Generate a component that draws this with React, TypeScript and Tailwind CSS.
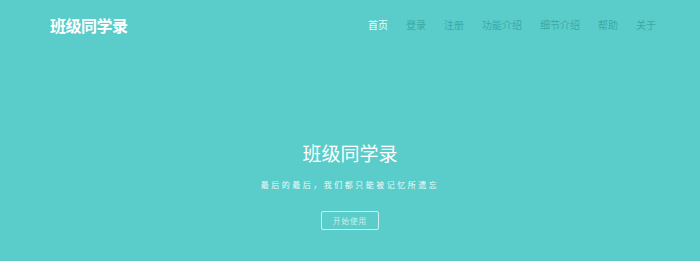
import React from 'react';

const navItems = ['首页', '登录', '注册', '功能介绍', '细节介绍', '帮助', '关于'];

const App = () => {
  return (
    <div
      className="w-[700px] h-[261px] overflow-hidden bg-[#5acdca] text-white"
      style={{ fontFamily: '"Noto Sans CJK SC", "Noto Sans", sans-serif' }}
    >
      <header className="h-[50px] flex items-center justify-between pl-[50px] pr-[44px]">
        <div className="text-[16px] leading-[16px] font-bold tracking-[-0.5px]">班级同学录</div>
        <nav className="flex items-center gap-[18px]">
          {navItems.map((item, index) => (
            <a
              key={index}
              className={
                'text-[10px] leading-[10px] ' + (index === 0 ? 'text-[#eefcfb]' : 'text-[#3aa9a6]')
              }
            >
              {item}
            </a>
          ))}
        </nav>
      </header>
      <section className="flex flex-col items-center pt-[93px]">
        <h1 className="text-[19px] leading-[19px] font-normal">班级同学录</h1>
        <p className="mt-[18px] text-[8px] leading-[10px] tracking-[2.5px] text-[#eefaf9]">
          最后的最后，我们都只能被记忆所遗忘
        </p>
        <button className="mt-[21px] w-[58px] h-[19px] rounded-[2px] border border-white/70 text-[7.5px] tracking-[1px] text-white/70">
          开始使用
        </button>
      </section>
    </div>
  );
};

export default App;
